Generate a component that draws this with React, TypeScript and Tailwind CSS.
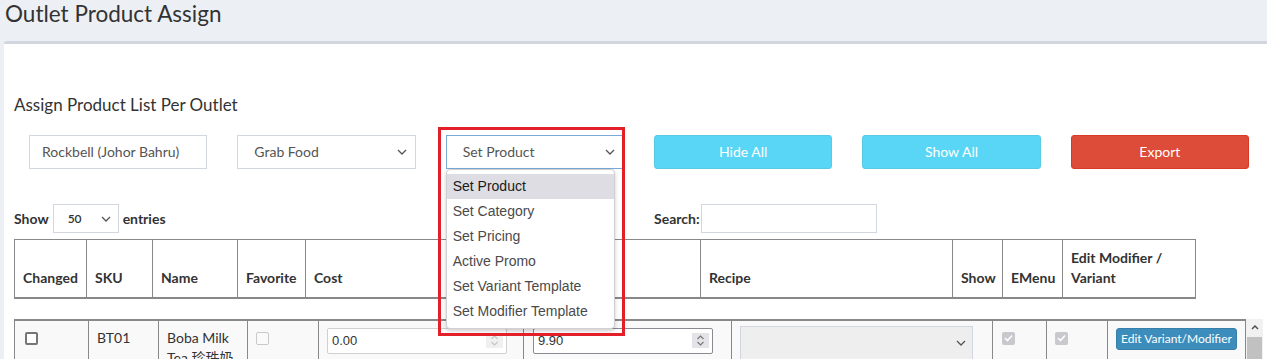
import React from "react";

const font = "font-['Lato','Noto_Sans_CJK_SC',sans-serif]";

const Chevron: React.FC<{ color?: string }> = ({ color = "#555" }) => (
  <svg width="10" height="6" viewBox="0 0 10 6">
    <path d="M1 1l4 4 4-4" fill="none" stroke={color} strokeWidth="1.3" />
  </svg>
);

const Spinner: React.FC<{ dark?: boolean }> = ({ dark }) => (
  <span className={dark ? "flex h-[15px] w-[17px] items-center justify-center bg-[#e4e4e8]" : "flex h-[15px] w-[17px] items-center justify-center bg-[#f0f0f0]"}>
    <svg width="9" height="13" viewBox="0 0 9 13">
      <path d="M1.5 5l3-3 3 3M1.5 8l3 3 3-3" fill="none" stroke={dark ? "#777" : "#c4c4c4"} strokeWidth="1.1" />
    </svg>
  </span>
);

const CheckedDisabled: React.FC = () => (
  <span className="flex h-[13px] w-[13px] items-center justify-center rounded-[2px] bg-[#c8c8cd]">
    <svg width="9" height="8" viewBox="0 0 9 8">
      <path d="M1 4l2.5 2.5L8 1.5" fill="none" stroke="#fff" strokeWidth="1.6" />
    </svg>
  </span>
);

const options = [
  "Set Product",
  "Set Category",
  "Set Pricing",
  "Active Promo",
  "Set Variant Template",
  "Set Modifier Template",
];

// price column label sits under the open dropdown, so it's left blank
const headCols = [
  { label: "Changed", w: 72 },
  { label: "SKU", w: 66 },
  { label: "Name", w: 85 },
  { label: "Favorite", w: 68 },
  { label: "Cost", w: 197 },
  { label: "", w: 198 },
  { label: "Recipe", w: 252 },
  { label: "Show", w: 50 },
  { label: "EMenu", w: 60 },
  { label: "Edit Modifier / Variant", w: 133 },
];

const bodyCols = [74, 70, 89, 71, 205, 208, 261, 54, 61, 138];

const App: React.FC = () => {
  return (
    <div className={`h-[359px] w-[1267px] overflow-hidden bg-[#ecf0f5] text-[#333] ${font}`}>
      <header className="h-[41px] px-[5px] pt-[1px]">
        <h1 className="text-[22.5px] leading-[26px]">Outlet Product Assign</h1>
      </header>

      <div className="ml-[4px] h-[400px] rounded-tl-[3px] border-t-[3px] border-[#d2d6de] bg-white pl-[10px]">
        <h3 className="pt-[51px] text-[17px] leading-[20px]">Assign Product List Per Outlet</h3>

        <div className="mt-[20px] grid w-[1250px] grid-cols-6 text-[14px]">
          <div className="px-[15px]">
            <div className="flex h-[34px] items-center border border-[#d2d6de] px-[12px] pb-[1px] text-[#555]">Rockbell (Johor Bahru)</div>
          </div>
          <div className="px-[15px]">
            <div className="flex h-[34px] items-center justify-between border border-[#d2d6de] pb-[1px] pl-[16px] pr-[8px] text-[#555]">
              <span>Grab Food</span>
              <Chevron />
            </div>
          </div>
          <div className="px-[15px]">
            <div className="relative">
              <div className="flex h-[34px] items-center justify-between border border-[#7aa9d6] pb-[1px] pl-[16px] pr-[8px] text-[#555]">
                <span>Set Product</span>
                <Chevron />
              </div>
              <div className="absolute left-0 top-[34px] z-10 w-[169px] rounded-[4px] border border-[#cfcfd4] bg-white py-[4px] font-['Liberation_Sans',Arial,sans-serif] text-[14px] shadow-[0_2px_4px_rgba(0,0,0,0.2)]">
                {options.map((o, i) => (
                  <div
                    key={o}
                    className={i === 0 ? "flex h-[25px] items-center bg-[#dedde3] pl-[6px] text-[#1a1a1a]" : "flex h-[25px] items-center pl-[6px] text-[#4a4a4a]"}
                  >
                    {o}
                  </div>
                ))}
              </div>
              <div className="pointer-events-none absolute -left-[8px] -top-[8px] z-20 h-[209px] w-[187px] border-[3px] border-[#e3202a]" />
            </div>
          </div>
          <div className="px-[15px]">
            <button className="h-[34px] w-full rounded-[3px] border border-[#59c9e4] bg-[#59d6f5] pb-[1px] text-white">Hide All</button>
          </div>
          <div className="px-[15px]">
            <button className="h-[34px] w-full rounded-[3px] border border-[#59c9e4] bg-[#59d6f5] pb-[1px] text-white">Show All</button>
          </div>
          <div className="px-[15px]">
            <button className="h-[34px] w-full rounded-[3px] border border-[#d73925] bg-[#dd4b39] pb-[1px] text-white">Export</button>
          </div>
        </div>

        <div className="mt-[35px] grid h-[29px] grid-cols-[640px_1fr] text-[14px] font-bold">
          <div className="flex items-center">
            <span>Show</span>
            <div className="ml-[4px] flex h-[29px] w-[66px] items-center justify-between border border-[#d2d6de] pl-[14px] pr-[7px] text-[12px] font-semibold">
              <span>50</span>
              <Chevron />
            </div>
            <span className="ml-[4px]">entries</span>
          </div>
          <div className="flex items-center">
            <span>Search:</span>
            <div className="ml-[1px] h-[29px] w-[176px] border border-[#d2d6de]" />
          </div>
        </div>

        <table className="mt-[6px] table-fixed border-collapse text-[14px]" style={{ width: 1181 }}>
          <colgroup>
            {headCols.map((c, i) => (
              <col key={i} style={{ width: c.w }} />
            ))}
          </colgroup>
          <thead>
            <tr className="h-[58px]">
              {headCols.map((c, i) => (
                <th
                  key={i}
                  className="border border-b-2 border-[#888] px-[8px] pb-[9px] text-left align-bottom text-[14px] leading-[20px] font-bold"
                >
                  {c.label}
                </th>
              ))}
            </tr>
          </thead>
        </table>

        <div className="mt-[20px] flex">
          <table className="table-fixed border-collapse text-[14px]" style={{ width: 1231 }}>
            <colgroup>
              {bodyCols.map((w, i) => (
                <col key={i} style={{ width: w }} />
              ))}
            </colgroup>
            <tbody>
              <tr className="bg-[#f9f9f9] align-top leading-[20px]">
                <td className="border border-t-2 border-[#888] px-[8px] py-[7px]">
                  <span className="mt-[4px] ml-[2px] block h-[13px] w-[13px] rounded-[2px] border-2 border-[#767676] bg-white" />
                </td>
                <td className="border border-t-2 border-[#888] px-[8px] py-[7px]">BT01</td>
                <td className="border border-t-2 border-[#888] px-[8px] py-[7px]">Boba Milk Tea 珍珠奶茶</td>
                <td className="border border-t-2 border-[#888] px-[8px] py-[7px]">
                  <span className="mt-[4px] block h-[13px] w-[13px] rounded-[2px] border border-[#c9c9cc] bg-[#fafafa]" />
                </td>
                <td className="border border-t-2 border-[#888] px-[8px] py-[7px]">
                  <div className="flex h-[26px] w-[180px] items-center justify-between rounded-[2px] border border-[#d0d0d0] bg-white pl-[4px] pr-[3px] font-['Liberation_Sans',Arial,sans-serif] text-[13px]">
                    <span>0.00</span>
                    <Spinner />
                  </div>
                </td>
                <td className="border border-t-2 border-[#888] px-[9px] py-[7px]">
                  <div className="flex h-[26px] w-[180px] items-center justify-between rounded-[2px] border border-[#8a8a92] bg-white pl-[4px] pr-[3px] font-['Liberation_Sans',Arial,sans-serif] text-[13px]">
                    <span>9.90</span>
                    <Spinner dark />
                  </div>
                </td>
                <td className="border border-t-2 border-[#888] px-[8px] py-[5px]">
                  <div className="flex h-[34px] w-[233px] items-center justify-end border border-[#d2d6de] bg-[#eeeeee] pr-[6px]">
                    <Chevron />
                  </div>
                </td>
                <td className="border border-t-2 border-[#888] px-[9px] py-[11px]">
                  <CheckedDisabled />
                </td>
                <td className="border border-t-2 border-[#888] px-[8px] py-[11px]">
                  <CheckedDisabled />
                </td>
                <td className="border border-t-2 border-[#888] px-[8px] py-[7px]">
                  <button className="h-[22px] w-[121px] rounded-[3px] border border-[#367fa9] bg-[#3c8dbc] text-[12px] leading-[20px] text-white">
                    Edit Variant/Modifier
                  </button>
                </td>
              </tr>
            </tbody>
          </table>
          <div className="flex h-[60px] w-[17px] flex-col bg-[#f1f1f1]">
            <div className="flex h-[18px] items-center justify-center">
              <svg width="8" height="5" viewBox="0 0 8 5">
                <path d="M1 4l3-3 3 3" fill="none" stroke="#505050" strokeWidth="1.5" />
              </svg>
            </div>
            <div className="mx-[1px] flex-1 bg-[#c1c1c1]" />
          </div>
        </div>
      </div>
    </div>
  );
};

export default App;
